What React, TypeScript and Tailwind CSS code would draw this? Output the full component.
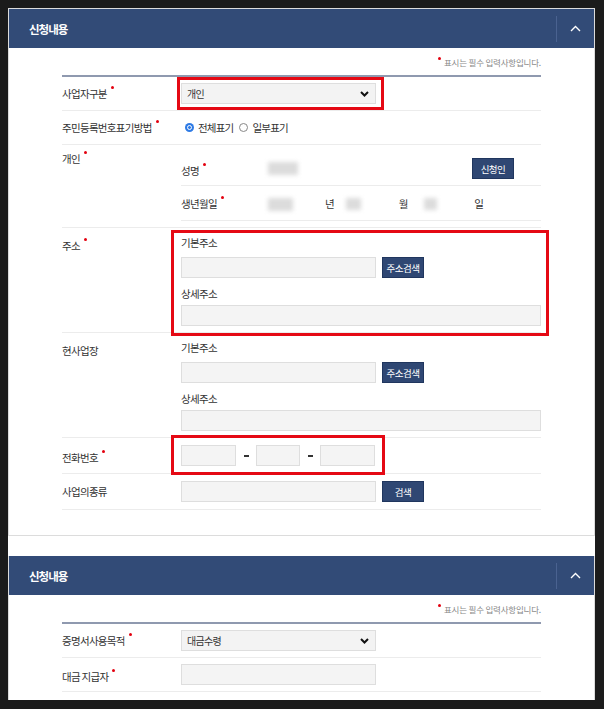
import React from "react";

type LabelProps = {
  children: React.ReactNode;
  req?: boolean;
};

function Dot({ className = "" }: { className?: string }) {
  return (
    <span
      className={`relative inline-block h-[3px] w-[3px] rounded-full bg-[#e3000f] ${className}`}
    />
  );
}

function Label({ children, req }: LabelProps) {
  return (
    <span className="inline-block whitespace-nowrap align-top text-[10.5px] leading-[16px] tracking-[-0.7px] text-[#333]">
      {children}
      {req && <Dot className="-top-[9px] ml-[4px]" />}
    </span>
  );
}

function Field({ w }: { w: string }) {
  return <div className={`h-[21px] shrink-0 border border-[#dedede] bg-[#f4f4f4] ${w}`} />;
}

function NavyButton({ children }: { children: React.ReactNode }) {
  return (
    <button className="flex h-[21px] w-[42px] shrink-0 items-center justify-center border border-[#20365e] bg-[#2f4773] text-[9.5px] tracking-[-0.5px] text-white">
      {children}
    </button>
  );
}

function SelectBox({ value }: { value: string }) {
  return (
    <div className="flex h-[21px] w-[195px] items-center justify-between border border-[#dedede] bg-[#f3f3f3] pl-[5px] pr-[6px]">
      <span className="text-[10px] tracking-[-0.7px] text-[#333]">{value}</span>
      <svg width="9" height="6" viewBox="0 0 9 6">
        <polyline points="1,1 4.5,4.5 8,1" fill="none" stroke="#111" strokeWidth="2" />
      </svg>
    </div>
  );
}

function Blur({ w, h = "h-[13px]" }: { w: string; h?: string }) {
  return <div className={`shrink-0 bg-[#dcdcdc] blur-[2px] ${w} ${h}`} />;
}

function Radio({ checked, label }: { checked?: boolean; label: string }) {
  return (
    <span className="flex items-center gap-[4px]">
      {checked ? (
        <span className="flex h-[9px] w-[9px] items-center justify-center rounded-full bg-[#2f7be5]">
          <span className="h-[5px] w-[5px] rounded-full border border-white bg-[#2f7be5]" />
        </span>
      ) : (
        <span className="h-[9px] w-[9px] rounded-full border border-[#888] bg-white" />
      )}
      <span className="text-[10.5px] tracking-[-0.8px] text-[#333]">{label}</span>
    </span>
  );
}

function Header() {
  return (
    <div className="flex h-[39px] items-center bg-[#324b77]">
      <h2 className="flex-1 pl-[20px] text-[11.5px] font-bold tracking-[-1px] text-white">
        신청내용
      </h2>
      <div className="h-[26px] w-px bg-[#4a6290]" />
      <div className="flex w-[37px] items-center justify-center">
        <svg width="11" height="7" viewBox="0 0 11 7">
          <polyline points="1,6 5.5,1.5 10,6" fill="none" stroke="white" strokeWidth="1.4" />
        </svg>
      </div>
    </div>
  );
}

function Note() {
  return (
    <div className="flex h-[27px] items-center justify-end text-[8.5px] tracking-[-0.2px] text-[#888]">
      <Dot className="-top-[3px] mr-[3px]" />
      표시는 필수 입력사항입니다.
    </div>
  );
}

function Dash() {
  return (
    <div className="flex w-[20px] justify-center">
      <div className="h-[2px] w-[5px] bg-[#333]" />
    </div>
  );
}

function AddressBlock() {
  return (
    <div className="flex flex-col pb-[6px] pt-[7px]">
      <div className="flex">
        <Label>기본주소</Label>
      </div>
      <div className="mt-[6px] flex gap-[6px]">
        <Field w="w-[195px]" />
        <NavyButton>주소검색</NavyButton>
      </div>
      <div className="mt-[8px] flex">
        <Label>상세주소</Label>
      </div>
      <div className="mt-[3px]">
        <Field w="w-full" />
      </div>
    </div>
  );
}

export default function App() {
  return (
    <div className="relative h-[709px] w-[604px] overflow-hidden bg-[#1b1b1b] pb-[9px] pl-[8px] pr-[9px] pt-[8px] font-['Noto_Sans_CJK_KR','Noto_Sans',sans-serif] leading-[16px]">
      <div className="h-full overflow-hidden bg-white">
        {/* first panel */}
        <div className="border border-[#dcdcdc]">
          <Header />
          <div className="px-[53px] pb-[25px]">
            <Note />
            <div className="h-[2px] bg-[#8f99af]" />

            <div className="flex h-[34px] items-center border-b border-[#ececec]">
              <div className="w-[119px]">
                <Label req>사업자구분</Label>
              </div>
              <SelectBox value="개인" />
            </div>

            <div className="flex h-[34px] items-center border-b border-[#ececec]">
              <div className="w-[119px]">
                <Label req>주민등록번호표기방법</Label>
              </div>
              <div className="flex items-center gap-[6px] pl-[4px]">
                <Radio checked label="전체표기" />
                <Radio label="일부표기" />
              </div>
            </div>

            <div className="flex border-b border-[#ececec] pb-[6px]">
              <div className="flex w-[119px] items-start pt-[6px]">
                <Label req>개인</Label>
              </div>
              <div className="flex-1">
                <div className="flex h-[41px] items-center border-b border-[#ececec] pt-[7px]">
                  <div className="flex w-[87px] pt-[4px]">
                    <Label req>성명</Label>
                  </div>
                  <Blur w="w-[30px]" />
                  <div className="ml-auto mr-[27px]">
                    <NavyButton>신청인</NavyButton>
                  </div>
                </div>
                <div className="flex h-[35px] items-center border-b border-[#ececec] pt-[2px] text-[10.5px] text-[#333]">
                  <div className="flex w-[87px]">
                    <Label req>생년월일</Label>
                  </div>
                  <Blur w="w-[25px]" />
                  <span className="ml-[32px]">년</span>
                  <div className="ml-[11px]">
                    <Blur w="w-[15px]" h="h-[12px]" />
                  </div>
                  <span className="ml-[38px]">월</span>
                  <div className="ml-[16px]">
                    <Blur w="w-[13px]" h="h-[12px]" />
                  </div>
                  <span className="ml-[37px]">일</span>
                </div>
              </div>
            </div>

            <div className="flex border-b border-[#ececec]">
              <div className="flex w-[119px] items-start pt-[10px]">
                <Label req>주소</Label>
              </div>
              <div className="flex-1">
                <AddressBlock />
              </div>
            </div>

            <div className="flex border-b border-[#ececec]">
              <div className="flex w-[119px] items-start pt-[10px]">
                <Label>현사업장</Label>
              </div>
              <div className="flex-1">
                <AddressBlock />
              </div>
            </div>

            <div className="flex h-[36px] items-center border-b border-[#ececec]">
              <div className="flex w-[119px] pt-[4px]">
                <Label req>전화번호</Label>
              </div>
              <Field w="w-[55px]" />
              <Dash />
              <Field w="w-[44px]" />
              <Dash />
              <Field w="w-[55px]" />
            </div>

            <div className="flex h-[36px] items-center border-b border-[#ececec]">
              <div className="flex w-[119px]">
                <Label>사업의종류</Label>
              </div>
              <div className="flex gap-[6px]">
                <Field w="w-[195px]" />
                <NavyButton>검색</NavyButton>
              </div>
            </div>
          </div>
        </div>

        {/* second panel */}
        <div className="mt-[20px] border border-t-0 border-[#dcdcdc]">
          <Header />
          <div className="px-[53px] pb-[25px]">
            <Note />
            <div className="h-[2px] bg-[#8f99af]" />
            <div className="flex h-[34px] items-center border-b border-[#ececec]">
              <div className="flex w-[119px]">
                <Label req>증명서사용목적</Label>
              </div>
              <SelectBox value="대금수령" />
            </div>
            <div className="flex h-[34px] items-center border-b border-[#ececec]">
              <div className="flex w-[119px] pt-[4px]">
                <Label req>대금 지급자</Label>
              </div>
              <Field w="w-[195px]" />
            </div>
          </div>
        </div>
      </div>

      {/* annotation boxes */}
      <div className="absolute left-[177px] top-[77px] h-[33px] w-[207px] border-[3px] border-[#e50914]" />
      <div className="absolute left-[171px] top-[230px] h-[106px] w-[378px] border-[3px] border-[#e50914]" />
      <div className="absolute left-[171px] top-[435px] h-[40px] w-[214px] border-[3px] border-[#e50914]" />
    </div>
  );
}
